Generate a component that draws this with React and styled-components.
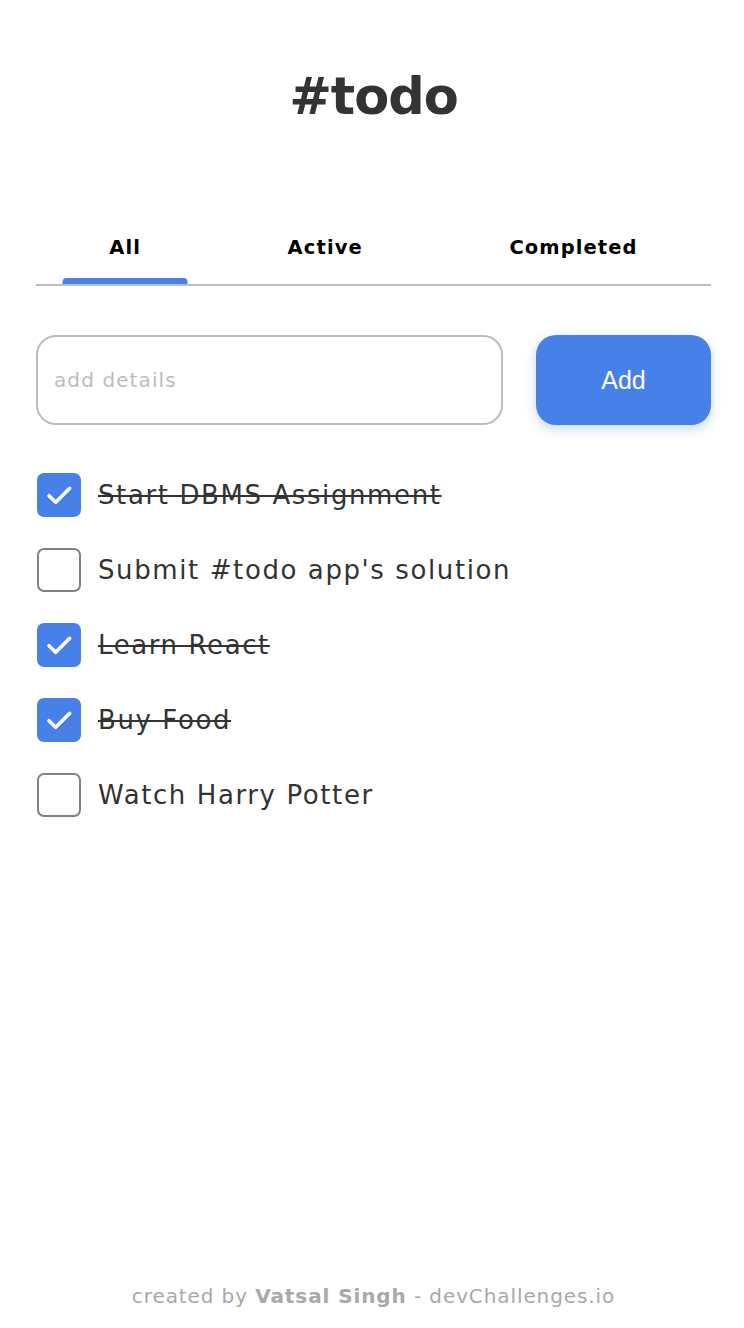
import React, { useState } from "react";
import styled, { createGlobalStyle } from "styled-components";

const Global = createGlobalStyle`
  html, body { margin: 0; padding: 0; background: #fff; }
  body { font-family: "DejaVu Sans", "Noto Sans", sans-serif; color: #333; }
  * { box-sizing: border-box; }
`;

const Page = styled.div`
  min-height: 1328px;
  display: flex;
  flex-direction: column;
  padding: 0 33px 0 36px;
`;

const Main = styled.main`
  flex: 1;
  display: flex;
  flex-direction: column;
`;

const Title = styled.h1`
  margin: 62px 0 0;
  text-align: center;
  font-size: 51px;
  line-height: 70px;
  font-weight: 700;
  color: #333;
  letter-spacing: -1px;
`;

const Tabs = styled.nav`
  margin-top: 104px;
  display: flex;
  justify-content: space-around;
  border-bottom: 2px solid #bdbdbd;
`;

const Tab = styled.button`
  position: relative;
  background: none;
  border: none;
  padding: 0 0 24px;
  font-family: inherit;
  font-size: 19.5px;
  font-weight: 600;
  letter-spacing: 1.1px;
  color: #000;
  cursor: pointer;
  line-height: 24px;
  &::after {
    content: "";
    display: ${(p) => (p.$active ? "block" : "none")};
    position: absolute;
    left: 50%;
    bottom: 0;
    width: 125px;
    height: 6px;
    transform: translateX(-50%);
    background: #4780e6;
    border-radius: 4px 4px 0 0;
  }
`;

const Form = styled.form`
  margin-top: 49px;
  display: flex;
  gap: 33px;
`;

const Input = styled.input`
  flex: 1;
  height: 90px;
  border: 2px solid #bdbdbd;
  border-radius: 20px;
  padding: 0 16px;
  font-family: inherit;
  font-size: 20px;
  letter-spacing: 1.1px;
  color: #333;
  outline: none;
  &::placeholder { color: #bdbdbd; }
`;

const AddButton = styled.button`
  width: 175px;
  height: 90px;
  border: none;
  border-radius: 20px;
  background: #4780e6;
  color: #fff;
  font-family: "Liberation Sans", Arial, sans-serif;
  font-size: 25px;
  box-shadow: 0 4px 12px rgba(71, 128, 230, 0.3);
  cursor: pointer;
`;

const List = styled.ul`
  list-style: none;
  margin: 48px 0 0;
  padding: 0;
  display: flex;
  flex-direction: column;
  gap: 31px;
`;

const Item = styled.li`
  display: flex;
  align-items: center;
  gap: 17px;
  height: 44px;
`;

const Box = styled.span`
  width: 44px;
  height: 44px;
  margin-left: 1px;
  flex: none;
  border-radius: 7px;
  border: ${(p) => (p.$checked ? "none" : "2px solid #828282")};
  background: ${(p) => (p.$checked ? "#4780e6" : "#fff")};
  display: flex;
  align-items: center;
  justify-content: center;
`;

const Label = styled.span`
  font-size: 26px;
  letter-spacing: 1.6px;
  color: #333;
  text-decoration: ${(p) => (p.$done ? "line-through" : "none")};
`;

const Footer = styled.footer`
  text-align: center;
  font-size: 20px;
  letter-spacing: 0.9px;
  color: #a9a9a9;
  padding-bottom: 20px;
  b { font-weight: 700; }
`;

const tasks = [
  { text: "Start DBMS Assignment", done: true },
  { text: "Submit #todo app's solution", done: false },
  { text: "Learn React", done: true },
  { text: "Buy Food", done: true },
  { text: "Watch Harry Potter", done: false },
];

const Check = () => (
  <svg width="32" height="32" viewBox="0 0 24 24" fill="none" stroke="#fff" strokeWidth="2.7" strokeLinecap="round" strokeLinejoin="round">
    <path d="M4.5 12.5l5 5L20 7" />
  </svg>
);

export default function App() {
  const [items, setItems] = useState(tasks);
  return (
    <>
      <Global />
      <Page>
        <Main>
          <Title>#todo</Title>
          <Tabs>
            <Tab $active>All</Tab>
            <Tab>Active</Tab>
            <Tab>Completed</Tab>
          </Tabs>
          <Form onSubmit={(e) => e.preventDefault()}>
            <Input placeholder="add details" />
            <AddButton type="submit">Add</AddButton>
          </Form>
          <List>
            {items.map((t, i) => (
              <Item key={i} onClick={() => setItems(items.map((x, j) => (j === i ? { ...x, done: !x.done } : x)))}>
                <Box $checked={t.done}>{t.done && <Check />}</Box>
                <Label $done={t.done}>{t.text}</Label>
              </Item>
            ))}
          </List>
        </Main>
        <Footer>
          created by <b>Vatsal Singh</b> - devChallenges.io
        </Footer>
      </Page>
    </>
  );
}
